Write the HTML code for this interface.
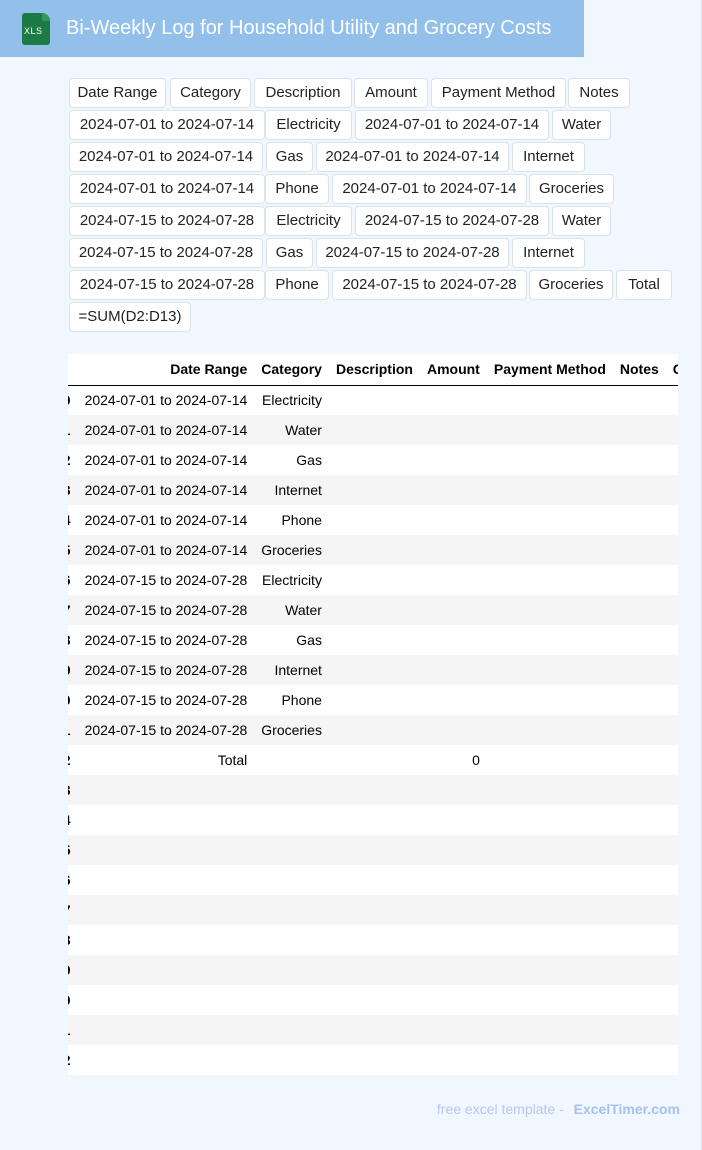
<!DOCTYPE html>
<html><head><meta charset="utf-8"><style>
*{margin:0;padding:0;box-sizing:border-box}
body{width:702px;height:1150px;background:#f0f7fe;font-family:"Liberation Sans",sans-serif;position:relative;overflow:hidden;border-right:1px solid #dde6f0}
.hdr{position:absolute;left:0;top:0;width:584px;height:57px;background:#92c0ea}
.hdr h1{position:absolute;left:66px;top:17px;font-size:20px;font-weight:normal;color:#fff;white-space:nowrap}
.ico{position:absolute;left:22px;top:13px;width:28px;height:32px;background:#1e7a45;border-radius:3px 8px 3px 3px}
.ico span{position:absolute;left:2px;top:13px;font-size:9px;color:#fff;letter-spacing:0.5px}
.ico i{position:absolute;right:0;top:0;width:8px;height:8px;background:#2f9a5c;border-radius:0 8px 0 2px}
.b{position:absolute;height:30px;background:#fff;border:1px solid #dbe3ea;border-radius:4px;font-size:15px;color:#222;text-align:center;line-height:28px;white-space:nowrap}
.tbl{position:absolute;left:68px;top:354px;width:610px;height:721px;background:#fff;overflow:hidden}
table{border-collapse:collapse;font-size:14px;color:#000;position:absolute;left:-20px;top:0}
th{height:31px;font-weight:bold;text-align:right;padding:0 7px;border-bottom:1px solid #000;white-space:nowrap}
td{height:30px;text-align:right;padding:0 7px;white-space:nowrap}
tr:nth-child(odd) td{background:#f5f5f5}
td:first-child{font-weight:bold}
.ft{position:absolute;right:21px;top:1101px;font-size:14px;color:#b5c8ef}
.ft b{color:#a9bff0;margin-left:6px}
</style></head><body>
<div class="hdr"><div class="ico"><i></i><span>XLS</span></div><h1>Bi-Weekly Log for Household Utility and Grocery Costs</h1></div>

<div class="b" style="left:69px;top:78px;width:97px">Date Range</div>
<div class="b" style="left:170px;top:78px;width:81px">Category</div>
<div class="b" style="left:254px;top:78px;width:98px">Description</div>
<div class="b" style="left:354px;top:78px;width:74px">Amount</div>
<div class="b" style="left:431px;top:78px;width:135px">Payment Method</div>
<div class="b" style="left:568px;top:78px;width:62px">Notes</div>

<div class="b" style="left:69px;top:110px;width:196px">2024-07-01 to 2024-07-14</div>
<div class="b" style="left:265px;top:110px;width:87px">Electricity</div>
<div class="b" style="left:355px;top:110px;width:194px">2024-07-01 to 2024-07-14</div>
<div class="b" style="left:552px;top:110px;width:59px">Water</div>

<div class="b" style="left:69px;top:142px;width:194px">2024-07-01 to 2024-07-14</div>
<div class="b" style="left:266px;top:142px;width:47px">Gas</div>
<div class="b" style="left:316px;top:142px;width:193px">2024-07-01 to 2024-07-14</div>
<div class="b" style="left:512px;top:142px;width:73px">Internet</div>

<div class="b" style="left:69px;top:174px;width:196px">2024-07-01 to 2024-07-14</div>
<div class="b" style="left:265px;top:174px;width:64px">Phone</div>
<div class="b" style="left:332px;top:174px;width:195px">2024-07-01 to 2024-07-14</div>
<div class="b" style="left:529px;top:174px;width:85px">Groceries</div>

<div class="b" style="left:69px;top:206px;width:196px">2024-07-15 to 2024-07-28</div>
<div class="b" style="left:265px;top:206px;width:87px">Electricity</div>
<div class="b" style="left:355px;top:206px;width:194px">2024-07-15 to 2024-07-28</div>
<div class="b" style="left:552px;top:206px;width:59px">Water</div>

<div class="b" style="left:69px;top:238px;width:194px">2024-07-15 to 2024-07-28</div>
<div class="b" style="left:266px;top:238px;width:47px">Gas</div>
<div class="b" style="left:316px;top:238px;width:193px">2024-07-15 to 2024-07-28</div>
<div class="b" style="left:512px;top:238px;width:73px">Internet</div>

<div class="b" style="left:69px;top:270px;width:196px">2024-07-15 to 2024-07-28</div>
<div class="b" style="left:265px;top:270px;width:64px">Phone</div>
<div class="b" style="left:332px;top:270px;width:195px">2024-07-15 to 2024-07-28</div>
<div class="b" style="left:529px;top:270px;width:84px">Groceries</div>
<div class="b" style="left:616px;top:270px;width:56px">Total</div>

<div class="b" style="left:69px;top:302px;width:122px">=SUM(D2:D13)</div>

<div class="tbl"><table>
<tr><th style="width:24px"></th><th style="width:177px">Date Range</th><th style="width:74px">Category</th><th style="width:91px">Description</th><th style="width:67px">Amount</th><th style="width:126px">Payment Method</th><th style="width:53px">Notes</th><th>Cost</th></tr>
<tr><td>0</td><td>2024-07-01 to 2024-07-14</td><td>Electricity</td><td></td><td></td><td></td><td></td><td></td></tr>
<tr><td>1</td><td>2024-07-01 to 2024-07-14</td><td>Water</td><td></td><td></td><td></td><td></td><td></td></tr>
<tr><td>2</td><td>2024-07-01 to 2024-07-14</td><td>Gas</td><td></td><td></td><td></td><td></td><td></td></tr>
<tr><td>3</td><td>2024-07-01 to 2024-07-14</td><td>Internet</td><td></td><td></td><td></td><td></td><td></td></tr>
<tr><td>4</td><td>2024-07-01 to 2024-07-14</td><td>Phone</td><td></td><td></td><td></td><td></td><td></td></tr>
<tr><td>5</td><td>2024-07-01 to 2024-07-14</td><td>Groceries</td><td></td><td></td><td></td><td></td><td></td></tr>
<tr><td>6</td><td>2024-07-15 to 2024-07-28</td><td>Electricity</td><td></td><td></td><td></td><td></td><td></td></tr>
<tr><td>7</td><td>2024-07-15 to 2024-07-28</td><td>Water</td><td></td><td></td><td></td><td></td><td></td></tr>
<tr><td>8</td><td>2024-07-15 to 2024-07-28</td><td>Gas</td><td></td><td></td><td></td><td></td><td></td></tr>
<tr><td>9</td><td>2024-07-15 to 2024-07-28</td><td>Internet</td><td></td><td></td><td></td><td></td><td></td></tr>
<tr><td>10</td><td>2024-07-15 to 2024-07-28</td><td>Phone</td><td></td><td></td><td></td><td></td><td></td></tr>
<tr><td>11</td><td>2024-07-15 to 2024-07-28</td><td>Groceries</td><td></td><td></td><td></td><td></td><td></td></tr>
<tr><td>12</td><td>Total</td><td></td><td></td><td>0</td><td></td><td></td><td></td></tr>
<tr><td>13</td><td></td><td></td><td></td><td></td><td></td><td></td><td></td></tr>
<tr><td>14</td><td></td><td></td><td></td><td></td><td></td><td></td><td></td></tr>
<tr><td>15</td><td></td><td></td><td></td><td></td><td></td><td></td><td></td></tr>
<tr><td>16</td><td></td><td></td><td></td><td></td><td></td><td></td><td></td></tr>
<tr><td>17</td><td></td><td></td><td></td><td></td><td></td><td></td><td></td></tr>
<tr><td>18</td><td></td><td></td><td></td><td></td><td></td><td></td><td></td></tr>
<tr><td>19</td><td></td><td></td><td></td><td></td><td></td><td></td><td></td></tr>
<tr><td>20</td><td></td><td></td><td></td><td></td><td></td><td></td><td></td></tr>
<tr><td>21</td><td></td><td></td><td></td><td></td><td></td><td></td><td></td></tr>
<tr><td>22</td><td></td><td></td><td></td><td></td><td></td><td></td><td></td></tr>
</table></div>

<div class="ft">free excel template - <b>ExcelTimer.com</b></div>
</body></html>
